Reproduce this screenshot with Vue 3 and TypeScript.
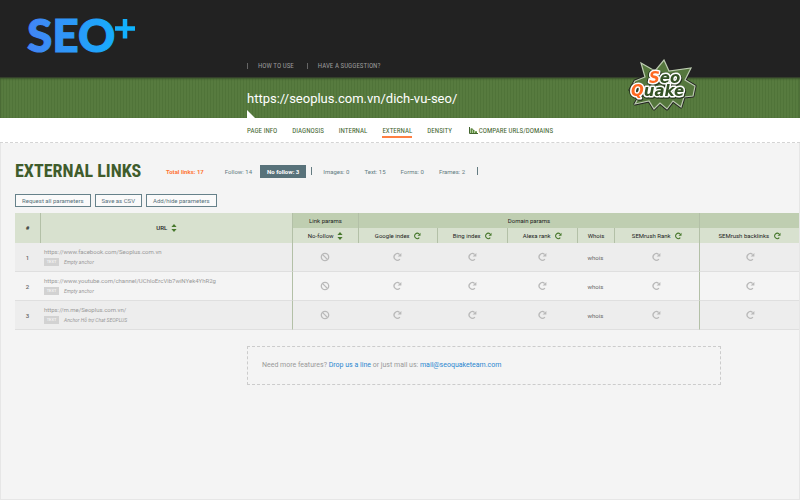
<script setup lang="ts">
interface LinkRow {
  id: number
  url: string
  anchor: string
}

const nav: string[] = ['Page info', 'Diagnosis', 'Internal', 'External', 'Density']

const rows: LinkRow[] = [
  { id: 1, url: 'https://www.facebook.com/Seoplus.com.vn', anchor: 'Empty anchor' },
  { id: 2, url: 'https://www.youtube.com/channel/UChloErcVib7wiNYek4YhR2g', anchor: 'Empty anchor' },
  { id: 3, url: 'https://m.me/Seoplus.com.vn/', anchor: 'Anchor Hỗ trợ Chat SEOPLUS' },
]

const actions: string[] = ['Request all parameters', 'Save as CSV', 'Add/hide parameters']
const kinds: string[] = ['Images: 0', 'Text: 15', 'Forms: 0', 'Frames: 2']
const domainParams: string[] = ['Google index', 'Bing index', 'Alexa rank', 'Whois', 'SEMrush Rank']
const cells: string[] = [...domainParams, 'SEMrush backlinks']
</script>

<template>
  <div class="page">
    <svg class="defs" aria-hidden="true">
      <symbol id="refresh" viewBox="0 0 10 10">
        <path d="M7.6 2.4A3.3 3.3 0 1 0 7.9 7.1" fill="none" stroke="currentColor" stroke-width="1.3" />
        <path d="M5.6 4.6H9.4V0.9Z" fill="currentColor" />
      </symbol>
      <symbol id="sort" viewBox="0 0 6 8">
        <path d="M0.4 3L3 0L5.6 3ZM0.4 5L3 8L5.6 5Z" fill="currentColor" />
      </symbol>
      <symbol id="blocked" viewBox="0 0 10 10">
        <circle cx="5" cy="5" r="3.7" fill="none" stroke="currentColor" stroke-width="1.3" />
        <path d="M2.4 2.4L7.6 7.6" stroke="currentColor" stroke-width="1.3" />
      </symbol>
    </svg>

    <header class="top">
      <svg class="brand" viewBox="0 0 116 55" role="img" aria-label="SEO plus">
        <defs>
          <linearGradient id="brand-fill" gradientUnits="userSpaceOnUse" x1="0" y1="0" x2="110" y2="0">
            <stop offset="0" stop-color="#4285f4" />
            <stop offset="1" stop-color="#0cb6ff" />
          </linearGradient>
        </defs>
        <text class="brand-text" x="-1" y="44" fill="url(#brand-fill)" stroke="url(#brand-fill)">SEO</text>
        <path d="M87 20.500H107M97 11V30.500" stroke="url(#brand-fill)" stroke-width="4.500" />
      </svg>
      <nav class="help">
        <a href="#how">How to use</a>
        <a href="#suggest">Have a suggestion?</a>
      </nav>
    </header>

    <section class="banner">
      <p class="address">https://seoplus.com.vn/dich-vu-seo/</p>
      <svg class="quake" viewBox="0 0 76 54" role="img" aria-label="Seo Quake">
        <path
          d="M8 22L18 18L14 4L28 12L37 1L42 12L64 9L58 21L68 27L66 37L57 38L54 48L46 42L40 50L33 44L27 50L22 42L8 45L13 36L3 31Z"
          fill="#55773d" stroke="#222" stroke-width="3" stroke-linejoin="round"
        />
        <path
          d="M8 22L18 18L14 4L28 12L37 1L42 12L64 9L58 21L68 27L66 37L57 38L54 48L46 42L40 50L33 44L27 50L22 42L8 45L13 36L3 31Z"
          fill="#55773d" stroke="#bccbb0" stroke-width="1.200"
        />
        <g class="quake-text">
          <text x="22" y="24"><tspan class="big">S</tspan>eo</text>
          <text x="4" y="37"><tspan class="big">Q</tspan>uake</text>
        </g>
      </svg>
    </section>

    <nav class="tabs">
      <a
        v-for="item in nav"
        :key="item"
        :href="'#' + item"
        :class="{ active: item === 'External' }"
      >{{ item }}</a>
      <a href="#compare" class="compare">
        <svg viewBox="0 0 9 7" aria-hidden="true">
          <path d="M0.500 0V6.500H9" fill="none" stroke="#44652f" />
          <path d="M1.500 6V1.500H3.500V6ZM4 6V3H5.500V6ZM6 6V4.200H8V6Z" fill="#5e8f3b" />
          <path d="M2.500 1.500L5 3.500" fill="none" stroke="#44652f" stroke-width="0.700" />
        </svg>Compare URLs/domains
      </a>
    </nav>

    <main>
      <div class="heading">
        <h1>External links</h1>
        <div class="filters">
          <button type="button" class="total">Total links: 17</button>
          <button type="button">Follow: 14</button>
          <button type="button" class="selected">No follow: 3</button>
          <i class="bar"></i>
          <button v-for="kind in kinds" :key="kind" type="button">{{ kind }}</button>
          <i class="bar"></i>
        </div>
      </div>

      <div class="actions">
        <button v-for="action in actions" :key="action" type="button">{{ action }}</button>
      </div>

      <table>
        <colgroup>
          <col class="c-num" /><col /><col class="c-nofollow" /><col class="c-google" /><col class="c-bing" />
          <col class="c-bing" /><col class="c-whois" /><col class="c-rank" /><col class="c-back" />
        </colgroup>
        <thead>
          <tr>
            <th rowspan="2" class="num">#</th>
            <th rowspan="2" class="num">URL <svg class="sort"><use href="#sort" /></svg></th>
            <th class="group edge">Link params</th>
            <th class="group edge" colspan="5">Domain params</th>
            <th class="group edge"></th>
          </tr>
          <tr>
            <th class="edge">No-follow <svg class="sort"><use href="#sort" /></svg></th>
            <th v-for="name in cells" :key="name" class="edge">
              {{ name }} <svg v-if="name !== 'Whois'" class="refresh"><use href="#refresh" /></svg>
            </th>
          </tr>
        </thead>
        <tbody>
          <tr v-for="row in rows" :key="row.id">
            <td class="num">{{ row.id }}</td>
            <td class="link">
              <a :href="row.url">{{ row.url }}</a>
              <div class="anchor"><span class="tag">TEXT</span><em>{{ row.anchor }}</em></div>
            </td>
            <td class="edge"><svg class="state"><use href="#blocked" /></svg></td>
            <td v-for="name in cells" :key="name" :class="{ edge: name === 'SEMrush backlinks' }">
              <span v-if="name === 'Whois'">whois</span>
              <svg v-else class="state"><use href="#refresh" /></svg>
            </td>
          </tr>
        </tbody>
      </table>

      <p class="contact">
        Need more features? <a href="#line">Drop us a line</a> or just mail us:
        <a href="mailto:mail@seoquaketeam.com">mail@seoquaketeam.com</a>
      </p>
    </main>
  </div>
</template>

<style>
body {
  margin: 0;
  background: #f4f4f4;
}
</style>

<style scoped>
.page {
  display: flex;
  flex-direction: column;
  min-height: 100vh;
  box-sizing: border-box;
  overflow-x: hidden;
  background: #f4f4f4;
  font-family: Roboto, "Liberation Sans", sans-serif;
  font-size: 6px;
  color: #333;
}

a {
  color: inherit;
  text-decoration: none;
}

.defs {
  display: none;
}

.top {
  box-sizing: border-box;
  padding: 8px 0 8px 28px;
  background: #222;
  border-bottom: 1px solid #34402b;
}

.brand {
  display: block;
  width: 116px;
  height: 55px;
  overflow: visible;
}

.brand-text {
  font: 900 46px Lato, sans-serif;
  stroke-width: 1px;
}

.help {
  display: flex;
  padding-left: 219px;
  font: 7px/6px "Roboto Condensed", "Liberation Sans Narrow", Roboto, sans-serif;
  text-transform: uppercase;
  color: #999;
}

.help a {
  border-left: 1px solid #666;
  padding-left: 10px;
  margin-right: 13px;
}

.banner {
  height: 40px;
  position: relative;
  padding-left: 247px;
  background: repeating-linear-gradient(90deg, #507439 0 1px, #577b3f 1px 3px);
  box-shadow: inset 0 1px 2px #3c542d;
}

.banner::after {
  content: "";
  position: absolute;
  left: 247px;
  bottom: 0;
  border-left: 8px solid #fff;
  border-top: 8px solid transparent;
}

.address {
  margin: 0;
  font-size: 13px;
  line-height: 42px;
  color: #fff;
}

.quake {
  position: absolute;
  left: 627px;
  top: -19px;
  width: 76px;
  height: 54px;
}

.quake-text {
  font: italic 700 15px "DejaVu Sans", sans-serif;
  fill: #355326;
  stroke: #fff;
  stroke-width: 3px;
  stroke-linejoin: round;
  paint-order: stroke;
  filter: drop-shadow(1px 1px 0 #26351d) drop-shadow(-1px 0 0 #26351d);
}

.quake-text .big {
  fill: #ff6a22;
}

.tabs {
  height: 25px;
  display: flex;
  gap: 15px;
  padding: 8px 0 0 247px;
  box-sizing: border-box;
  background: #fff;
  border-bottom: 1px dashed #d4d4d4;
  font: 7px/11px "Roboto Condensed", "Liberation Sans Narrow", Roboto, sans-serif;
  text-transform: uppercase;
  color: #44652f;
}

.tabs a {
  height: 10px;
}

.tabs .active {
  border-bottom: 2px solid #ff7f42;
}

.tabs .compare {
  padding-left: 2px;
}

.compare svg {
  width: 9px;
  height: 7px;
  margin-right: 1px;
  vertical-align: -1px;
}

main {
  flex: 1;
  padding: 17px 0 24px 14px;
  border: 1px solid #e6e6e6;
  border-top: 0;
}

.heading {
  display: flex;
  align-items: center;
  height: 22px;
}

h1 {
  margin: 0;
  width: 144px;
  white-space: nowrap;
  font: 700 18px/22px "Roboto Condensed", "Liberation Sans Narrow", Roboto, sans-serif;
  text-transform: uppercase;
  color: #3f5c2c;
}

button {
  font: inherit;
  border: 0;
  background: none;
  padding: 0;
  cursor: pointer;
}

.filters {
  display: flex;
  align-items: center;
}

.filters button {
  height: 13px;
  padding: 0 7px;
  margin-right: 1px;
  color: #637b81;
}

.filters .total {
  margin-right: 7px;
  color: #ff7433;
  font-weight: 700;
}

.filters .selected {
  background: #58727a;
  color: #fff;
  font-weight: 700;
}

.bar {
  width: 1px;
  height: 8px;
  margin: 0 4px;
  background: #637b81;
}

.actions {
  display: flex;
  gap: 4px;
  margin: 12px 0 6px;
}

.actions button {
  height: 13px;
  padding: 0 6px;
  border: 1px solid #66818a;
  background: #fafafa;
  color: #58727a;
}

table {
  width: 100%;
  table-layout: fixed;
  border-collapse: separate;
  border-spacing: 0;
}

.c-num { width: 25px; }
.c-nofollow { width: 66px; }
.c-google { width: 79px; }
.c-bing { width: 70px; }
.c-whois { width: 37px; }
.c-rank { width: 85px; }
.c-back { width: 100px; }

th {
  height: 15px;
  padding: 0;
  background: #d8e1cf;
  font-weight: 400;
  line-height: 8px;
  color: #222;
  white-space: nowrap;
}

th + th,
.edge {
  border-left: 1px solid #b3c0a7;
}

.group {
  background: #bfceb1;
}

.sort {
  width: 6px;
  height: 8px;
  margin-left: 2px;
  vertical-align: -2px;
  color: #47782c;
}

.refresh {
  width: 8px;
  height: 8px;
  margin-left: 2px;
  vertical-align: -2px;
  color: #47782c;
}

td {
  height: 29px;
  box-sizing: border-box;
  padding: 0;
  border-bottom: 1px solid #dfdfdf;
  text-align: center;
  vertical-align: middle;
  color: #666;
}

tbody tr:nth-child(odd) {
  background: #ededed;
}

.num {
  font-weight: 500;
}

.link {
  padding-left: 4px;
  text-align: left;
  line-height: 8px;
  color: #999;
}

.anchor {
  display: flex;
  align-items: center;
  gap: 5px;
  margin-top: 2px;
  font-size: 5px;
  line-height: 8px;
}

.tag {
  width: 15px;
  background: #d2d2d2;
  color: #fff;
  font-size: 4px;
  text-align: center;
}

.state {
  display: block;
  width: 10px;
  height: 10px;
  margin: 0 auto;
  color: #b9b9b9;
}

.contact {
  margin: 16px 78px 0 232px;
  padding: 13px 14px;
  border: 1px dashed #ccc;
  font-size: 7px;
  line-height: 11px;
  color: #999;
}

.contact a {
  color: #2a87d0;
}
</style>
